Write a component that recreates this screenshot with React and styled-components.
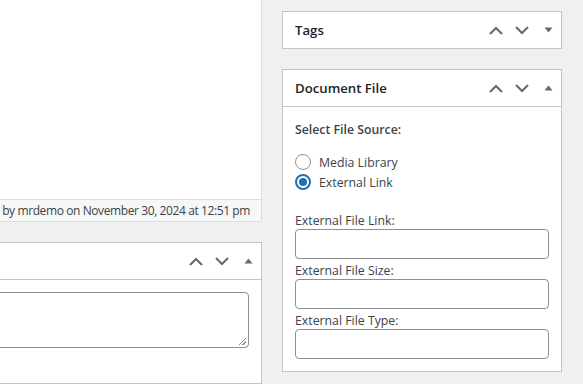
import React from 'react'
import styled, { createGlobalStyle } from 'styled-components'

const GlobalStyle = createGlobalStyle`
    html, body {
        margin: 0;
        padding: 0;
        background: #f0f0f1;
        font-family: "Open Sans", "Noto Sans", sans-serif;
        color: #3c434a;
        font-size: 12.3px;
    }
    * { box-sizing: border-box; }
`

const ChevronUp = () => (
    <svg width="14" height="9" viewBox="0 0 14 9">
        <path d="M1 8 L7 2 L13 8" fill="none" stroke="currentColor" strokeWidth="2" />
    </svg>
)

const ChevronDown = () => (
    <svg width="14" height="9" viewBox="0 0 14 9">
        <path d="M1 1 L7 7 L13 1" fill="none" stroke="currentColor" strokeWidth="2" />
    </svg>
)

const Triangle = ({ open }) => (
    <svg width="9" height="6" viewBox="0 0 9 6">
        {open
            ? <path d="M0.5 5.5 L4.5 0.5 L8.5 5.5 Z" fill="currentColor" />
            : <path d="M0.5 0.5 L4.5 5.5 L8.5 0.5 Z" fill="currentColor" />}
    </svg>
)

const Handles = ({ open }) => (
    <Actions>
        <HandleButton><ChevronUp /></HandleButton>
        <HandleButton><ChevronDown /></HandleButton>
        <HandleButton><Triangle open={open} /></HandleButton>
    </Actions>
)

const App = () => {
    return (
        <>
        <GlobalStyle />
        <Page>
            <Main>
                <Editor />
                <StatusBar>
                    <span>by mrdemo on November 30, 2024 at 12:51 pm</span>
                </StatusBar>
                <Postbox $cropped>
                    <Header>
                        <Title />
                        <Handles open />
                    </Header>
                    <Inside>
                        <TextArea />
                    </Inside>
                </Postbox>
            </Main>

            <Sidebar>
                <Postbox>
                    <Header>
                        <Title>Tags</Title>
                        <Handles />
                    </Header>
                </Postbox>

                <Postbox>
                    <Header>
                        <Title>Document File</Title>
                        <Handles open />
                    </Header>
                    <Inside>
                        <Heading>Select File Source:</Heading>
                        <RadioGroup>
                            <RadioLabel>
                                <Radio type="radio" name="source" />
                                Media Library
                            </RadioLabel>
                            <RadioLabel>
                                <Radio type="radio" name="source" defaultChecked />
                                External Link
                            </RadioLabel>
                        </RadioGroup>
                        <Field>
                            <FieldLabel>External File Link:</FieldLabel>
                            <Input type="text" />
                        </Field>
                        <Field>
                            <FieldLabel>External File Size:</FieldLabel>
                            <Input type="text" />
                        </Field>
                        <Field>
                            <FieldLabel>External File Type:</FieldLabel>
                            <Input type="text" />
                        </Field>
                    </Inside>
                </Postbox>
            </Sidebar>
        </Page>
        </>
    )
}

const Page = styled.div`
    display: flex;
    width: 583px;
    height: 384px;
    overflow: hidden;
`

const Main = styled.div`
    width: 262px;
    flex-shrink: 0;
    display: flex;
    flex-direction: column;
    overflow: hidden;
`

const Editor = styled.div`
    height: 199px;
    background: #fff;
    border-right: 1px solid #dcdcde;
`

const StatusBar = styled.div`
    height: 23px;
    display: flex;
    justify-content: flex-end;
    align-items: center;
    padding-right: 11px;
    background: #f6f7f7;
    border: 1px solid #dcdcde;
    border-left: none;
    white-space: nowrap;
    overflow: hidden;
    color: #3c434a;
    font-size: 12px;
    letter-spacing: -0.4px;
    margin-bottom: 20px;
`

const Sidebar = styled.div`
    width: 280px;
    margin-left: 20px;
    padding-top: 11px;
    display: flex;
    flex-direction: column;
    gap: 20px;
`

const Postbox = styled.div`
    background: #fff;
    border: 1px solid #c3c4c7;
    border-left: ${p => (p.$cropped ? 'none' : '1px solid #c3c4c7')};
    flex-shrink: 0;
    ${p => p.$cropped && 'flex: 1;'}
`

const Header = styled.div`
    height: 37px;
    display: flex;
    align-items: center;
    justify-content: space-between;
    padding-left: 12px;
    border-bottom: 1px solid #c3c4c7;

    &:last-child {
        border-bottom: none;
        height: 36px;
    }
`

const Title = styled.h2`
    margin: 0;
    font-size: 13.2px;
    font-weight: 600;
    color: #1d2327;
`

const Actions = styled.div`
    display: flex;
    height: 100%;
`

const HandleButton = styled.span`
    width: 26px;
    display: flex;
    align-items: center;
    justify-content: center;
    color: #646970;
`

const Inside = styled.div`
    padding: 12px;
    padding-top: 0;
`

const TextArea = styled.div`
    margin-top: 12px;
    margin-left: -20px;
    height: 56px;
    border: 1px solid #8c8f94;
    border-radius: 4px;
    position: relative;

    &::after {
        content: '';
        position: absolute;
        right: 2px;
        bottom: 2px;
        width: 7px;
        height: 7px;
        background: linear-gradient(135deg, transparent 45%, #8c8f94 45%, #8c8f94 55%, transparent 55%, transparent 70%, #8c8f94 70%, #8c8f94 80%, transparent 80%);
    }
`

const Heading = styled.p`
    margin: 13px 0;
    line-height: 19px;
    font-weight: 600;
    color: #3c434a;
`

const RadioGroup = styled.div`
    display: flex;
    flex-direction: column;
    margin-bottom: 20px;
`

const RadioLabel = styled.label`
    display: flex;
    align-items: center;
    gap: 8px;
    height: 20px;
    color: #3c434a;
`

const Radio = styled.input`
    appearance: none;
    margin: 0;
    width: 16px;
    height: 16px;
    border-radius: 50%;
    border: 1px solid #8c8f94;
    background: #fff;
    display: grid;
    place-items: center;

    &:checked {
        border: 2px solid #2271b1;
    }

    &:checked::before {
        content: '';
        width: 8px;
        height: 8px;
        border-radius: 50%;
        background: #2271b1;
    }
`

const Field = styled.div`
    display: flex;
    flex-direction: column;
    margin-bottom: 3px;

    &:last-child {
        margin-bottom: 0;
    }
`

const FieldLabel = styled.label`
    line-height: 17px;
    color: #3c434a;
`

const Input = styled.input`
    height: 30px;
    width: 100%;
    margin: 0;
    border: 1px solid #8c8f94;
    border-radius: 4px;
    background: #fff;
    font: inherit;
`

export default App
